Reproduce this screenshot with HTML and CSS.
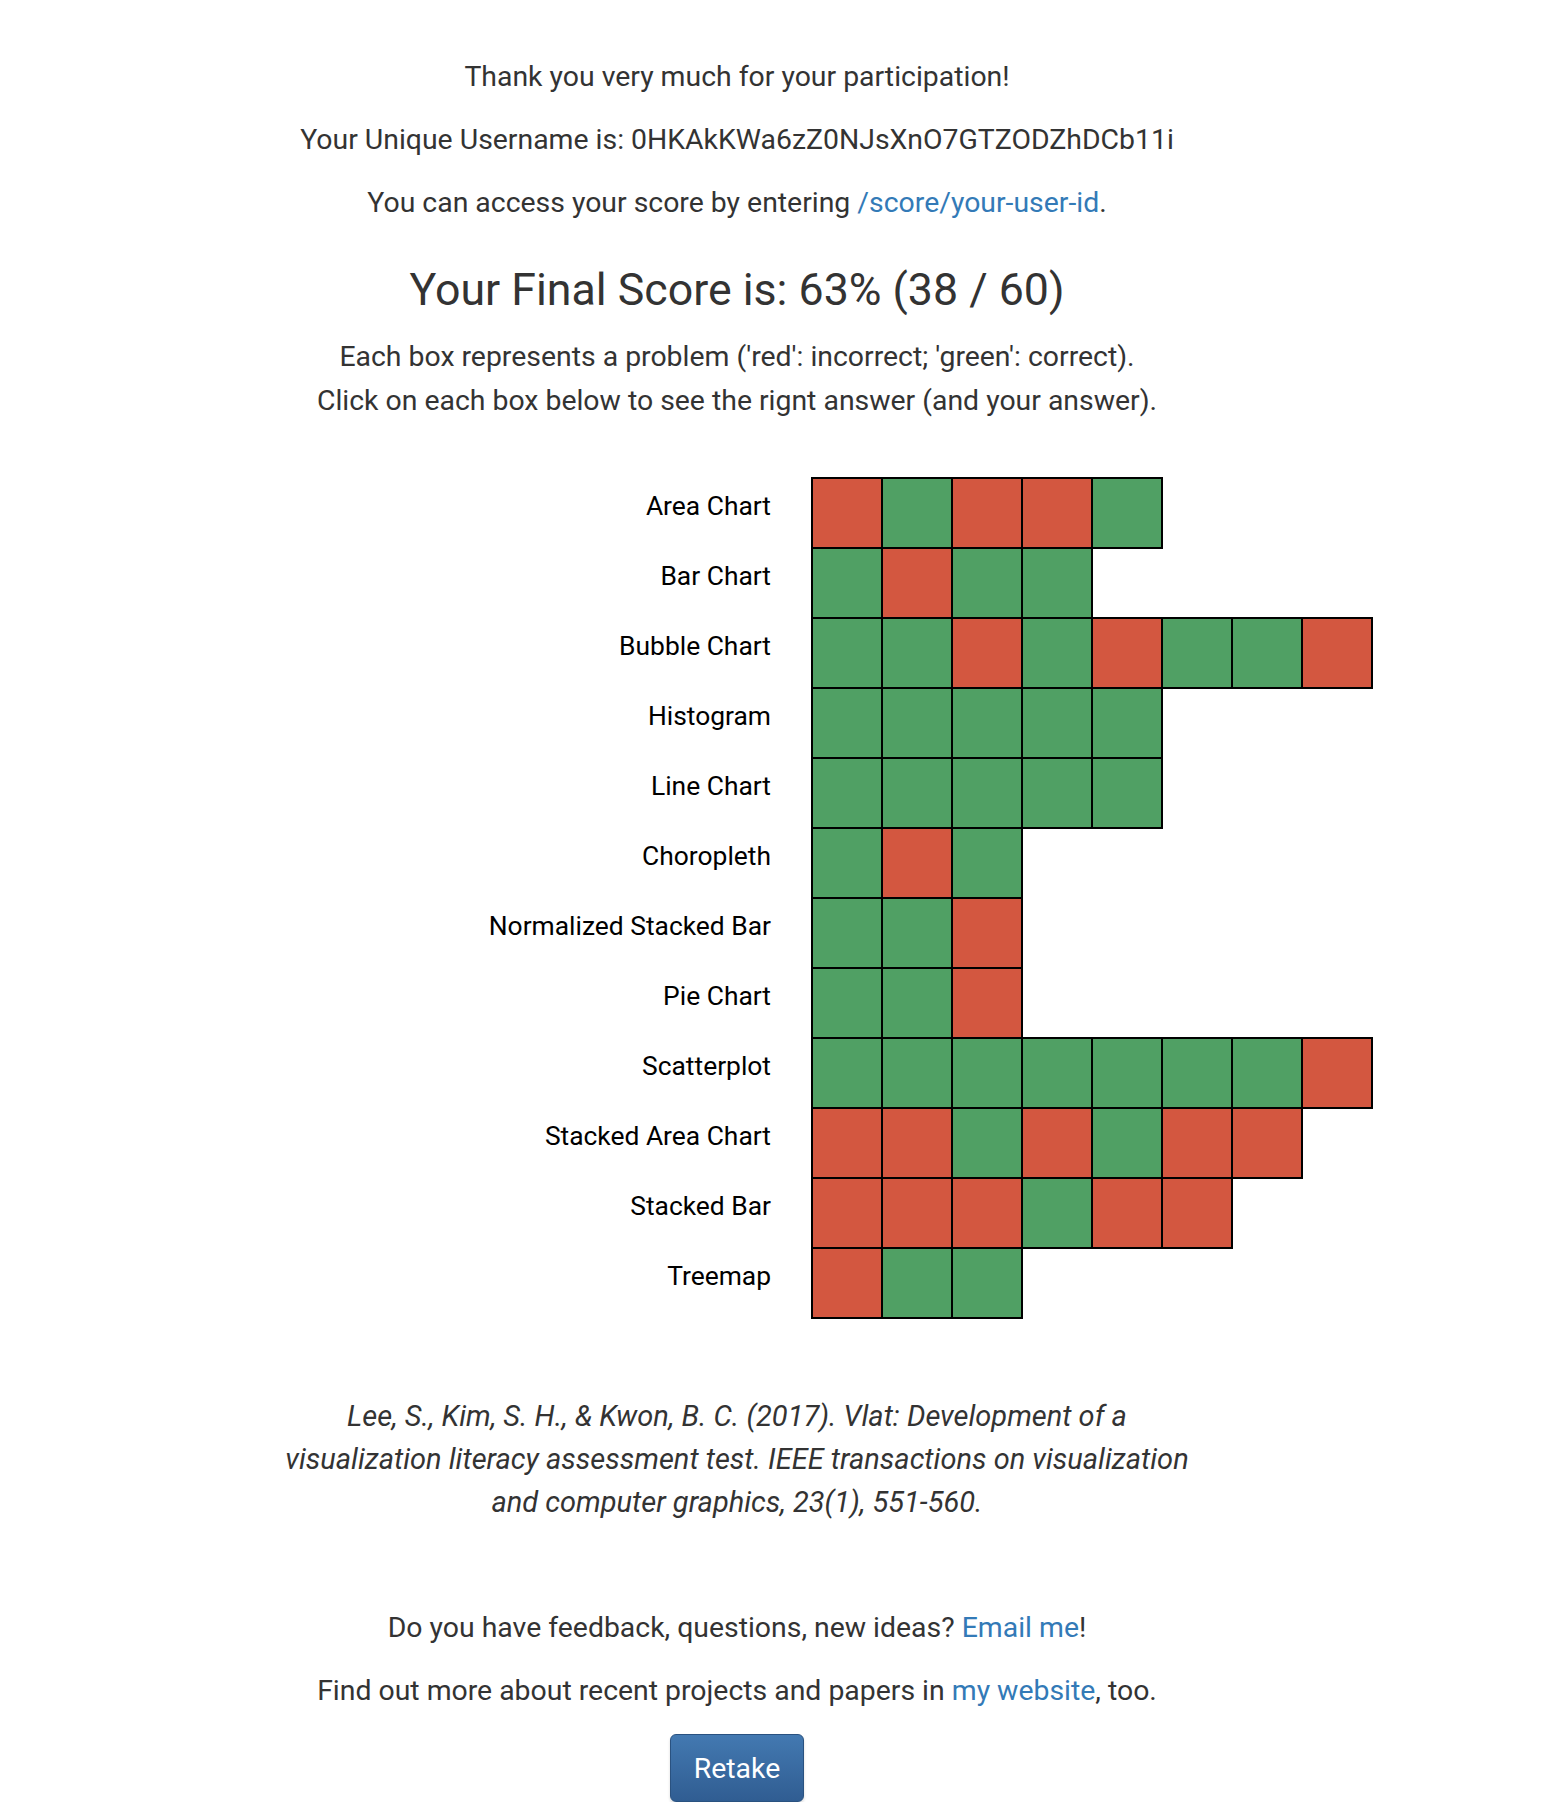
FILE: index.html
```html
<!DOCTYPE html>
<html lang="en">
<head>
<meta charset="utf-8">
<title>VLAT Score</title>
<link rel="stylesheet" href="styles.css">
</head>
<body>
<main class="page">
  <p class="line">Thank you very much for your participation!</p>
  <p class="line">Your Unique Username is: 0HKAkKWa6zZ0NJsXnO7GTZODZhDCb11i</p>
  <p class="line">You can access your score by entering <a href="#">/score/your-user-id</a>.</p>
  <h3 class="score">Your Final Score is: 63% (38 / 60)</h3>
  <p class="desc">Each box represents a problem ('red': incorrect; 'green': correct).<br>Click on each box below to see the rignt answer (and your answer).</p>

  <div class="chart">
    <div class="row"><div class="label">Area Chart</div><div class="cells"><span class="cell r"></span><span class="cell g"></span><span class="cell r"></span><span class="cell r"></span><span class="cell g"></span></div></div>
    <div class="row"><div class="label">Bar Chart</div><div class="cells"><span class="cell g"></span><span class="cell r"></span><span class="cell g"></span><span class="cell g"></span></div></div>
    <div class="row"><div class="label">Bubble Chart</div><div class="cells"><span class="cell g"></span><span class="cell g"></span><span class="cell r"></span><span class="cell g"></span><span class="cell r"></span><span class="cell g"></span><span class="cell g"></span><span class="cell r"></span></div></div>
    <div class="row"><div class="label">Histogram</div><div class="cells"><span class="cell g"></span><span class="cell g"></span><span class="cell g"></span><span class="cell g"></span><span class="cell g"></span></div></div>
    <div class="row"><div class="label">Line Chart</div><div class="cells"><span class="cell g"></span><span class="cell g"></span><span class="cell g"></span><span class="cell g"></span><span class="cell g"></span></div></div>
    <div class="row"><div class="label">Choropleth</div><div class="cells"><span class="cell g"></span><span class="cell r"></span><span class="cell g"></span></div></div>
    <div class="row"><div class="label">Normalized Stacked Bar</div><div class="cells"><span class="cell g"></span><span class="cell g"></span><span class="cell r"></span></div></div>
    <div class="row"><div class="label">Pie Chart</div><div class="cells"><span class="cell g"></span><span class="cell g"></span><span class="cell r"></span></div></div>
    <div class="row"><div class="label">Scatterplot</div><div class="cells"><span class="cell g"></span><span class="cell g"></span><span class="cell g"></span><span class="cell g"></span><span class="cell g"></span><span class="cell g"></span><span class="cell g"></span><span class="cell r"></span></div></div>
    <div class="row"><div class="label">Stacked Area Chart</div><div class="cells"><span class="cell r"></span><span class="cell r"></span><span class="cell g"></span><span class="cell r"></span><span class="cell g"></span><span class="cell r"></span><span class="cell r"></span></div></div>
    <div class="row"><div class="label">Stacked Bar</div><div class="cells"><span class="cell r"></span><span class="cell r"></span><span class="cell r"></span><span class="cell g"></span><span class="cell r"></span><span class="cell r"></span></div></div>
    <div class="row"><div class="label">Treemap</div><div class="cells"><span class="cell r"></span><span class="cell g"></span><span class="cell g"></span></div></div>
  </div>

  <p class="cite">Lee, S., Kim, S. H., &amp; Kwon, B. C. (2017). Vlat: Development of a<br>visualization literacy assessment test. IEEE transactions on visualization<br>and computer graphics, 23(1), 551-560.</p>

  <p class="line feedback">Do you have feedback, questions, new ideas? <a href="#">Email me</a>!</p>
  <p class="line">Find out more about recent projects and papers in <a href="#">my website</a>, too.</p>
  <button class="btn" type="button">Retake</button>
</main>
</body>
</html>
```

FILE: styles.css
```css
html, body {
  margin: 0;
  padding: 0;
  background: #fff;
}

.page {
  width: 1474px;
  padding-top: 56px;
  display: flex;
  flex-direction: column;
  align-items: center;
  text-align: center;
  color: #333;
  font-family: Roboto, "Liberation Sans", sans-serif;
  font-size: 28.4px;
  line-height: 42px;
}

.line {
  margin: 0 0 21px;
  white-space: nowrap;
}

a {
  color: #337ab7;
  text-decoration: none;
}

.score {
  margin: 17px 0 0;
  font-size: 44.7px;
  line-height: 56px;
  font-weight: 400;
  color: #333;
}

.desc {
  margin: 17px 0 0;
  line-height: 44px;
}

.chart {
  align-self: flex-start;
  margin: 55px 0 0 471px;
  display: flex;
  flex-direction: column;
}

.row {
  display: flex;
  height: 70px;
}

.label {
  width: 340px;
  box-sizing: border-box;
  padding-right: 40px;
  padding-bottom: 14px;
  text-align: right;
  color: #000;
  font-size: 26.4px;
  line-height: 56px;
  white-space: nowrap;
}

.cells {
  display: flex;
  height: 70px;
}

.cell {
  display: block;
  width: 72px;
  height: 72px;
  box-sizing: border-box;
  border: 2px solid #000;
  margin-right: -2px;
  margin-top: -1px;
}

.cell.r { background: #d35740; }
.cell.g { background: #50a064; }

.cite {
  margin: 77px 0 0;
  font-style: italic;
  font-size: 29px;
  line-height: 43px;
  white-space: nowrap;
}

.feedback {
  margin-top: 83px;
}

.btn {
  margin-top: 1px;
  width: 134px;
  height: 68px;
  font-family: Roboto, "Liberation Sans", sans-serif;
  font-size: 28.4px;
  color: #fff;
  background: linear-gradient(to bottom, #4379b1 0%, #305d92 100%);
  border: 1px solid #2a5280;
  border-radius: 6px;
  box-shadow: 0 2px 3px rgba(0, 0, 0, 0.15);
  padding: 0;
  cursor: pointer;
}
```
